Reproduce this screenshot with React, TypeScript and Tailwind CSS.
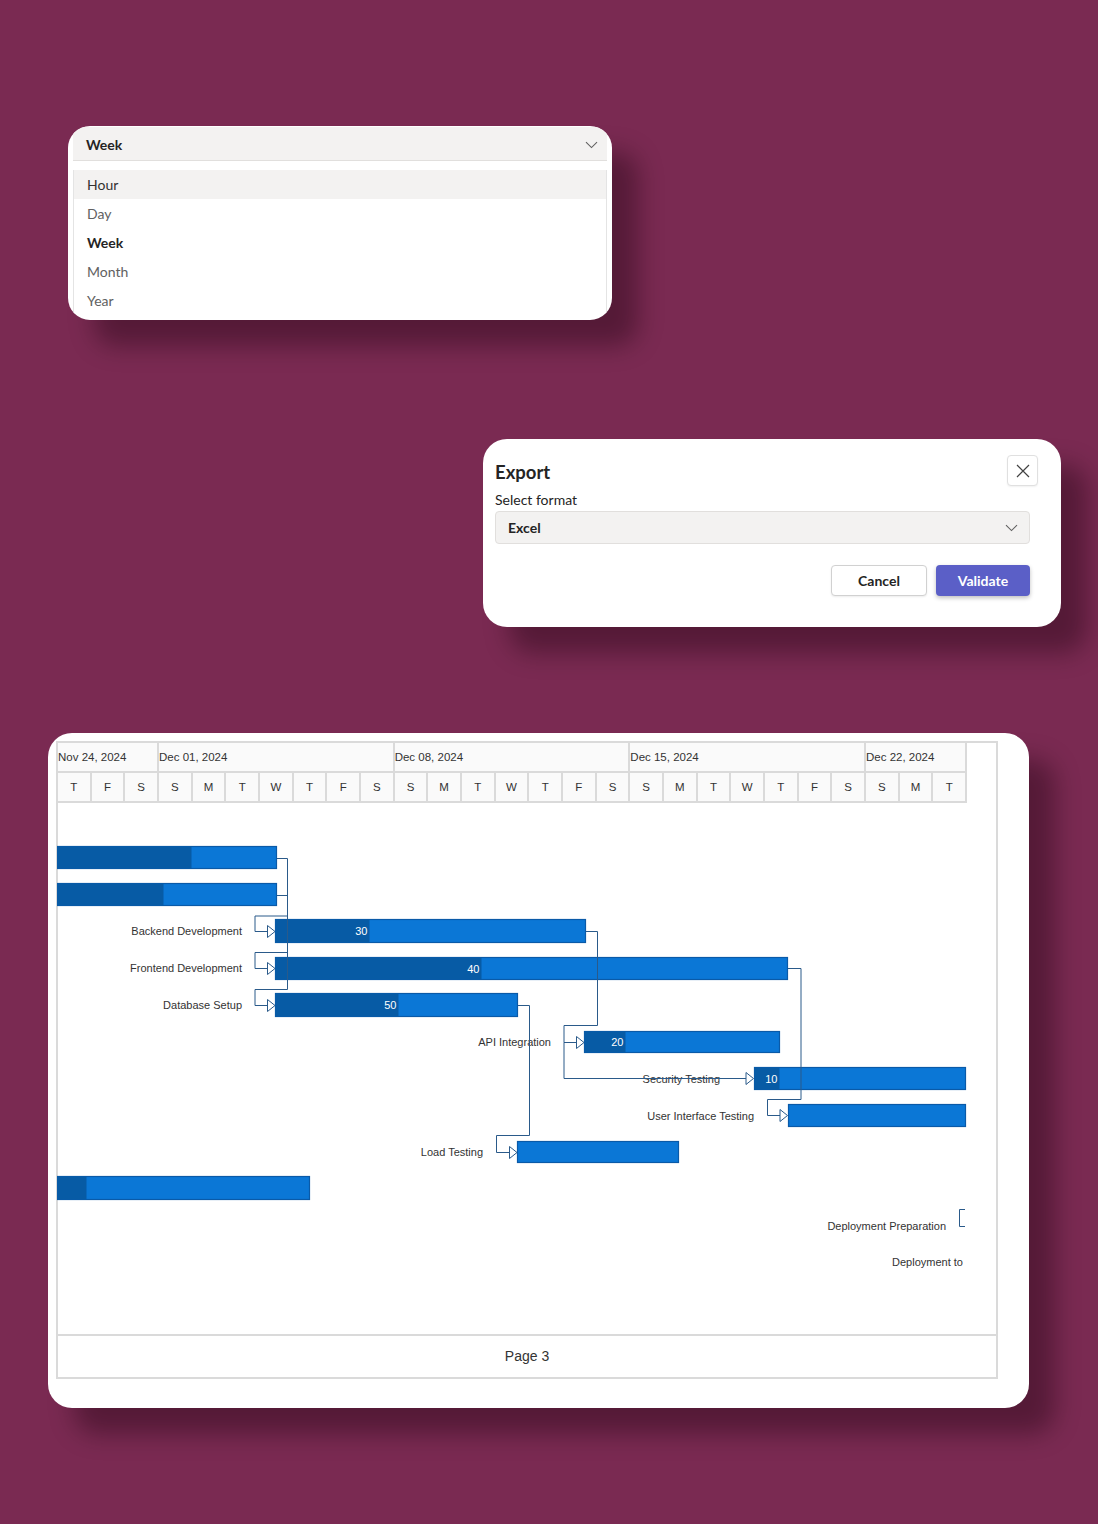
import React from 'react';

const Chevron = () => (
  <svg width="13" height="8" viewBox="0 0 13 8" className="block">
    <path d="M1 1.2 L6.5 6.6 L12 1.2" fill="none" stroke="#616161" strokeWidth="1.1" />
  </svg>
);

function TimeDropdown() {
  const items = [
    { t: 'Hour', cls: 'bg-[#f3f2f1] text-[#323130]' },
    { t: 'Day', cls: 'text-[#616161]' },
    { t: 'Week', cls: 'text-[#242424] font-bold' },
    { t: 'Month', cls: 'text-[#616161]' },
    { t: 'Year', cls: 'text-[#616161]' },
  ];
  return (
    <div className="ml-[68px] mt-[126px] w-[544px] h-[194px] rounded-[22px] bg-white overflow-hidden px-[5px] flex flex-col shadow-[26px_26px_24px_rgba(25,0,12,0.38)] font-['Lato',sans-serif]">
      <div className="mt-px h-[34px] shrink-0 bg-[#f3f2f1] border-b border-[#e1dfdd] flex items-center justify-between pl-[13px] pr-[9px] pt-[2px]">
        <span className="text-[14px] font-bold text-[#242424]">Week</span>
        <Chevron />
      </div>
      <div className="mt-[9px] flex-1 flex flex-col border-x border-[#e4e4e4]">
        {items.map((it) => (
          <div key={it.t} className={`h-[29px] shrink-0 flex items-center pl-[13px] text-[14px] ${it.cls}`}>
            {it.t}
          </div>
        ))}
      </div>
    </div>
  );
}

function ExportDialog() {
  return (
    <div className="ml-[483px] mt-[119px] w-[578px] h-[188px] rounded-[24px] bg-white pl-[12px] pr-[31px] pt-[17px] shadow-[26px_26px_24px_rgba(25,0,12,0.38)] font-['Lato',sans-serif] text-[#242424]">
      <div className="flex items-center justify-between">
        <h2 className="text-[18.5px] font-bold leading-[24px] mt-[1px]">Export</h2>
        <button className="-mr-[8px] -mt-px w-[31px] h-[31px] rounded-[4px] border border-[#e0e0e0] bg-white flex items-center justify-center shadow-[0_1px_2px_rgba(0,0,0,0.06)]">
          <svg width="14" height="14" viewBox="0 0 14 14">
            <path d="M1 1 L13 13 M13 1 L1 13" stroke="#424242" strokeWidth="1.2" fill="none" />
          </svg>
        </button>
      </div>
      <div className="mt-[4px] text-[14px] leading-[20px]">Select format</div>
      <div className="mt-px h-[33px] rounded-[4px] bg-[#f3f2f1] border border-[#e1dfdd] flex items-center justify-between pl-[12px] pr-[11px]">
        <span className="text-[14px] font-bold">Excel</span>
        <Chevron />
      </div>
      <div className="mt-[21px] flex justify-end gap-[9px]">
        <button className="w-[96px] h-[31px] rounded-[4px] border border-[#d1d1d1] bg-white text-[14px] font-bold text-[#242424] shadow-[0_1px_2px_rgba(0,0,0,0.08)]">
          Cancel
        </button>
        <button className="w-[94px] h-[31px] rounded-[4px] bg-[#5b5fc7] text-[14px] font-bold text-white shadow-[0_2px_4px_rgba(0,0,0,0.25)]">
          Validate
        </button>
      </div>
    </div>
  );
}

const weeks = [
  { t: 'Nov 24, 2024', span: 'col-span-3' },
  { t: 'Dec 01, 2024', span: 'col-span-7' },
  { t: 'Dec 08, 2024', span: 'col-span-7' },
  { t: 'Dec 15, 2024', span: 'col-span-7' },
  { t: 'Dec 22, 2024', span: 'col-span-3' },
];

const days = 'TFSSMTWTFSSMTWTFSSMTWTFSSMT'.split('');

type Bar = { x: number; y: number; w: number; h: number; p: number; n?: string };

const bars: Bar[] = [
  { x: 0, y: 43, w: 220, h: 23, p: 134 },
  { x: 0, y: 80, w: 220, h: 23, p: 106 },
  { x: 218, y: 116, w: 311, h: 24, p: 94, n: '30' },
  { x: 218, y: 154, w: 513, h: 23, p: 206, n: '40' },
  { x: 218, y: 190, w: 243, h: 24, p: 123, n: '50' },
  { x: 527, y: 228, w: 196, h: 22, p: 41, n: '20' },
  { x: 697, y: 264, w: 212, h: 23, p: 25, n: '10' },
  { x: 731, y: 301, w: 178, h: 23, p: 0 },
  { x: 460, y: 338, w: 162, h: 22, p: 0 },
  { x: 0, y: 373, w: 253, h: 24, p: 29 },
];

const labels = [
  { t: 'Backend Development', x: 185, y: 128 },
  { t: 'Frontend Development', x: 185, y: 165 },
  { t: 'Database Setup', x: 185, y: 202 },
  { t: 'API Integration', x: 494, y: 239 },
  { t: 'Security Testing', x: 663, y: 276 },
  { t: 'User Interface Testing', x: 697, y: 313 },
  { t: 'Load Testing', x: 426, y: 349 },
  { t: 'Deployment Preparation', x: 889, y: 423 },
  { t: 'Deployment to', x: 906, y: 459 },
];

const paths = [
  'M220 55.5 H230.5',
  'M220 92.5 H230.5',
  'M230.5 55.5 V186.5',
  'M230.5 113 H198 V128.5 H210.5',
  'M230.5 149.5 H198 V165.5 H210.5',
  'M230.5 186.5 H198 V202.5 H210.5',
  'M529 128.5 H540.5 V222.5 H507 V239.5 H519.5',
  'M507 239.5 V275.5 H689',
  'M731 165.5 H744 V296.5 H710.5 V312.5 H723',
  'M461 202.5 H472.5 V332.5 H439.5 V349.5 H452.5',
  'M908 406.5 H902.5 V423.5 H908',
];

const arrows = [
  [210.5, 128.5],
  [210.5, 165.5],
  [210.5, 202.5],
  [519.5, 239.5],
  [689, 275.5],
  [723, 312.5],
  [452.5, 349.5],
];

function GanttChart() {
  return (
    <svg width="941" height="531" viewBox="0 0 941 531" className="block -ml-px">
      {bars.map((b, i) => (
        <g key={i}>
          <rect x={b.x + 0.5} y={b.y + 0.5} width={b.w - 1} height={b.h - 1} fill="#0b77d6" stroke="#0a5aa8" strokeWidth="1.2" />
          {b.p > 0 && <rect x={b.x + 0.5} y={b.y + 0.5} width={b.p} height={b.h - 1} fill="#075ba5" />}
          {b.n && (
            <text x={b.x + b.p - 1.5} y={b.y + b.h / 2} textAnchor="end" dominantBaseline="central" fill="#ffffff" fontSize="11" fontFamily="'Liberation Sans', Arial, sans-serif">
              {b.n}
            </text>
          )}
        </g>
      ))}
      {labels.map((l) => (
        <text key={l.t} x={l.x} y={l.y} textAnchor="end" dominantBaseline="central" fill="#333333" fontSize="11" fontFamily="'Liberation Sans', Arial, sans-serif">
          {l.t}
        </text>
      ))}
      {paths.map((d, i) => (
        <path key={i} d={d} fill="none" stroke="#2a5a8a" strokeWidth="1" />
      ))}
      {arrows.map(([x, y], i) => (
        <polygon key={i} points={`${x},${y - 6} ${x + 7.5},${y} ${x},${y + 6}`} fill="#ffffff" stroke="#2a5a8a" strokeWidth="1" />
      ))}
    </svg>
  );
}

function GanttCard() {
  return (
    <div className="ml-[48px] mt-[106px] w-[981px] h-[675px] rounded-[24px] bg-white overflow-hidden pl-[8px] pt-[8px] shadow-[26px_26px_24px_rgba(25,0,12,0.38)] font-['Liberation_Sans',Arial,sans-serif] text-[#333333]">
      <div className="w-[942px] border-2 border-[#dadada] flex flex-col">
        <div className="w-[909px] grid grid-cols-[repeat(27,minmax(0,1fr))]">
          {weeks.map((w) => (
            <div key={w.t} className={`${w.span} h-[30px] pt-[2px] bg-[#fafafa] border-r-2 border-b-2 border-[#dadada] flex items-center text-[11.5px] whitespace-nowrap overflow-hidden`}>
              {w.t}
            </div>
          ))}
          {days.map((d, i) => (
            <div key={i} className="h-[30px] pt-[2px] bg-[#fafafa] border-r-2 border-b-2 border-[#dadada] flex items-center justify-center text-[11.5px]">
              {d}
            </div>
          ))}
        </div>
        <div className="h-[531px]">
          <GanttChart />
        </div>
        <div className="h-[43px] border-t-2 border-[#dadada] flex items-center justify-center text-[14px] text-[#333333]">
          Page 3
        </div>
      </div>
    </div>
  );
}

export default function App() {
  return (
    <div className="w-[1098px] h-[1524px] bg-[#7a2a52] flex flex-col overflow-hidden">
      <TimeDropdown />
      <ExportDialog />
      <GanttCard />
    </div>
  );
}
